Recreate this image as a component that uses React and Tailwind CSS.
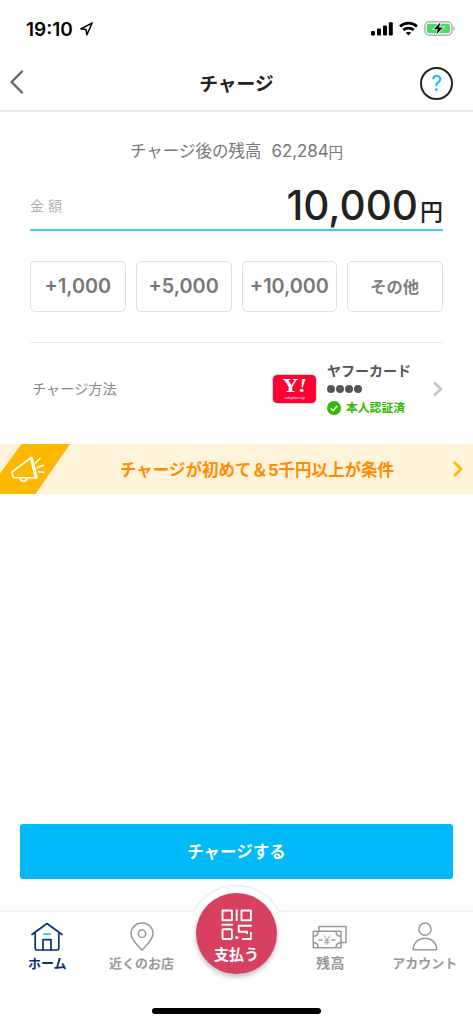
const StatusBar = () => {
  return (
    <div className="flex h-[56px] items-start justify-between pt-[20px] pr-[17px] pl-[26px]">
      <div className="flex items-center gap-[7px]">
        <span className="text-[19px] leading-[19px] font-semibold tracking-[0px] text-black">
          19:10
        </span>
        <svg className="mb-[2px]" width="14" height="15" viewBox="0 0 14 15" fill="none">
          <path
            d="M12.2 2 .8 7.8 6 8.600 6.900 13.800Z"
            stroke="#000"
            strokeWidth="1.5"
            strokeLinejoin="round"
          />
        </svg>
      </div>
      <div className="flex items-center pt-[1px]">
        <svg width="22" height="15" viewBox="0 0 22 15" fill="#000">
          <rect x="0" y="10" width="4" height="4.6" rx="1" />
          <rect x="6" y="7.5" width="4" height="7.1" rx="1" />
          <rect x="12" y="4.5" width="4" height="10.1" rx="1" />
          <rect x="17.8" y="1.2" width="4" height="13.4" rx="1" />
        </svg>
        <svg
          className="ml-[6px]"
          width="19"
          height="15"
          viewBox="0 0 19 15"
          fill="none"
          stroke="#000"
          strokeWidth="2.7"
        >
          <path d="M1 5.5C5.8 1 13.2 1 18 5.5" />
          <path d="M4.2 9.1c3-2.7 7.6-2.7 10.6 0" />
          <path d="M9.5 14.4 6.8 11.8c1.5-1.3 3.9-1.3 5.4 0Z" fill="#000" stroke="none" />
        </svg>
        <svg className="ml-[6px]" width="32" height="15" viewBox="0 0 32 15">
          <rect x="0.9" y="0.9" width="27" height="13.2" rx="4" fill="none" stroke="#a3a3a3" strokeWidth="1.2" />
          <rect x="2.8" y="2.7" width="23.2" height="9.6" rx="2.2" fill="#4cd964" />
          <path d="M29.4 5.2c1.8.7 1.8 3.9 0 4.6Z" fill="#a3a3a3" />
          <path
            d="M16.6 1.2 9.8 8.3h4l-1.6 5.3 6.9-7.2h-4.2Z"
            fill="#000"
            stroke="#fff"
            strokeWidth="1.6"
            paintOrder="stroke"
          />
        </svg>
      </div>
    </div>
  );
};

const Header = () => {
  return (
    <div className="grid h-[56px] grid-cols-[1fr_auto_1fr] items-center border-b-2 border-[#e9e9e9] pr-[20px] pl-[9px]">
      <svg className="mb-[3px]" width="34" height="26" viewBox="0 0 34 26" fill="none">
        <path d="M13 2.5 2.5 13 13 23.5" stroke="#666" strokeWidth="2.4" strokeLinecap="round" strokeLinejoin="round" />
      </svg>
      <h1 className="ml-[11px] pt-[4px] text-[18.8px] font-bold text-[#222]">チャージ</h1>
      <div className="flex size-[33px] items-center justify-center justify-self-end rounded-full border-2 border-[#222] text-[21px] leading-none text-[#00b9f6]">
        ?
      </div>
    </div>
  );
};

const amounts = ["+1,000", "+5,000", "+10,000"];

const AmountForm = () => {
  return (
    <div className="px-[30px]">
      <div className="flex h-[77px] items-center justify-center pt-[2px] text-[#777]">
        <span className="text-[16.5px]">チャージ後の残高</span>
        <span className="ml-[10px] text-[17px] tracking-[-0.1px]">62,284</span>
        <span className="mt-[2px] text-[14.5px]">円</span>
      </div>
      <div className="flex h-[40px] items-center justify-between pb-[7px]">
        <span className="text-[14px] tracking-[4px] text-[#b0b0b0]">金額</span>
        <div className="flex items-baseline text-[#222]">
          <span className="text-[40.5px] leading-[42px] font-medium">10,000</span>
          <span className="ml-[2px] text-[23px] leading-[30px] font-medium">円</span>
        </div>
      </div>
      <div className="h-[2px] bg-[#3dcbf8]"></div>
      <div className="mt-[30px] grid grid-cols-4 gap-[10px]">
        {amounts.map((item) => (
          <button
            className="h-[51px] rounded-[5px] border border-[#e0e0e0] text-[19.8px] font-semibold whitespace-nowrap text-[#777]"
            key={item}
          >
            {item}
          </button>
        ))}
        <button className="h-[51px] rounded-[5px] border border-[#e0e0e0] pt-[1px] pr-[1px] text-[16.3px] font-bold text-[#808080]">
          その他
        </button>
      </div>
      <div className="mt-[30px] border-t border-[#eaeaea]"></div>
    </div>
  );
};

const ChargeMethod = () => {
  return (
    <div className="flex h-[101px] items-center justify-between pr-[30px] pl-[32px]">
      <span className="pb-[9px] text-[14.2px] text-[#888]">チャージ方法</span>
      <div className="flex items-center pb-[9px]">
        <div className="flex h-[28px] w-[43px] flex-col items-center rounded-[4px] bg-[#ff0033] outline outline-[#e0d5d8]">
          <span className="scale-x-[1.15] pt-[1px] font-['Liberation_Serif',serif] text-[19px] leading-[19px] font-bold text-white">
            Y<i>!</i>
          </span>
          <span className="mt-[1px] font-['Liberation_Sans',sans-serif] text-[2.8px] leading-[4px] text-white">
            card.yahoo.co.jp
          </span>
        </div>
        <div className="ml-[11px] w-[86px]">
          <p className="text-[14px] leading-[18px] font-bold whitespace-nowrap text-[#555]">ヤフーカード</p>
          <div className="flex h-[19px] items-center gap-[1px]">
            <i className="size-[8px] rounded-full bg-[#555]"></i>
            <i className="size-[8px] rounded-full bg-[#555]"></i>
            <i className="size-[8px] rounded-full bg-[#555]"></i>
            <i className="size-[8px] rounded-full bg-[#555]"></i>
          </div>
          <div className="flex h-[18px] items-center gap-[5px]">
            <svg width="14" height="14" viewBox="0 0 14 14">
              <circle cx="7" cy="7" r="7" fill="#2fb900" />
              <path d="m3.8 7.3 2.4 2.3 4.2-4.8" fill="none" stroke="#fff" strokeWidth="1.7" />
            </svg>
            <span className="text-[11.8px] leading-[16px] font-bold text-[#2fb900]">本人認証済</span>
          </div>
        </div>
        <svg className="ml-[19px]" width="11" height="16" viewBox="0 0 11 16" fill="none">
          <path d="m2 1.5 7 6.5-7 6.5" stroke="#c4c4c8" strokeWidth="2.4" />
        </svg>
      </div>
    </div>
  );
};

const Campaign = () => {
  return (
    <div className="flex h-[50px] items-center bg-[#fff3d9]">
      <svg width="70" height="50" viewBox="0 0 70 50" fill="none" strokeLinecap="round" strokeLinejoin="round">
        <path d="M0 0V50H35.5L70 0Z" fill="#ffb800" />
        <path d="M0 0H21.5L0 29.5Z" fill="#fff3d9" />
        <g stroke="#fff" strokeWidth="1.6">
          <path d="M30.5 14 12 28l1.2 5.5L35.5 34Z" />
          <path d="m30.5 14 1.5-.5 5 20-1.5.5" />
          <path d="M20.3 34c0 4.2 6.3 4.4 6.5.2" />
          <path d="m35.5 19 4.5-4.5M37.5 23.6l5.8-2.3M38.6 27.8l5.6.6" />
        </g>
      </svg>
      <span className="ml-[50px] pt-[2px] text-[16.5px] font-bold whitespace-nowrap text-[#ff8c00]">
        チャージが初めて＆5千円以上が条件
      </span>
      <svg className="mr-[9px] ml-auto" width="12" height="18" viewBox="0 0 12 18" fill="none">
        <path d="m2 2 7 7-7 7" stroke="#ffb800" strokeWidth="2.8" />
      </svg>
    </div>
  );
};

const HomeIcon = () => (
  <svg width="32" height="30" viewBox="0 0 32 30" fill="none" stroke="#0b2e7d" strokeWidth="1.7" strokeLinecap="round" strokeLinejoin="round">
    <path d="M1 12.5 16 1.5l15 11" />
    <path d="M4.2 11v15.5q0 1.5 1.5 1.5h20.6q1.5 0 1.5-1.5V11" />
    <path d="M12 28V17.7h8V28" />
    <path d="M12.5 12.2h7" stroke="#2cc4f8" />
  </svg>
);

const PinIcon = () => (
  <svg width="24" height="30" viewBox="0 0 24 30" fill="none" stroke="#999" strokeWidth="1.5" strokeLinejoin="round">
    <path d="M12 28.3C10 25.5 1 18.5 1 11.5a11 10.6 0 0 1 22 0c0 7-9 14-11 16.8Z" />
    <circle cx="12" cy="11.7" r="3.7" />
  </svg>
);

const MoneyIcon = () => (
  <svg width="36" height="30" viewBox="0 0 36 30" fill="none" stroke="#999" strokeWidth="1.5" strokeLinejoin="round">
    <path d="M7 9V4.5h27v16h-5" />
    <rect x="1.3" y="9.3" width="27.7" height="16.5" rx="0.5" />
    <path d="M1.3 14.3c3 0 5-2 5-5M24 9.3c0 3 2 5 5 5M1.3 20.8c3 0 5 2 5 5M24 25.8c0-3 2-5 5-5" />
    <path d="M6.5 17.9h4M19.5 17.9h4" />
    <path d="m12 13.5 3 4.3 3-4.3M15 17.8v5M12.3 18.3h5.4M12.3 20.6h5.4" strokeWidth="1" />
  </svg>
);

const UserIcon = () => (
  <svg width="26" height="30" viewBox="0 0 26 30" fill="none" stroke="#999" strokeWidth="1.5" strokeLinejoin="round">
    <circle cx="13" cy="7.2" r="6.1" />
    <path d="M1.3 27.8c0-15.5 23.4-15.5 23.4 0Z" />
  </svg>
);

const QrIcon = () => (
  <svg width="32" height="32" viewBox="0 0 32 32" fill="none" stroke="#fff" strokeWidth="1.9" strokeLinejoin="round">
    <rect x="1.5" y="1.5" width="9.4" height="9.7" />
    <rect x="20.5" y="1.5" width="9.4" height="9.7" />
    <path d="M15.7 0.5V12" />
    <path d="M0.5 15.7h11.4" />
    <rect x="1.5" y="20.3" width="9.4" height="9.7" rx="1" />
    <path d="M30.8 16.7H17.7v6h8.3v2.300M29.900 23V30H21" />
    <circle cx="15.8" cy="28.6" r="1.7" fill="#fff" stroke="none" />
  </svg>
);

const navItems = [
  { label: "ホーム", icon: <HomeIcon />, style: "text-[13px] text-[#0b2e7d]" },
  { label: "近くのお店", icon: <PinIcon />, style: "text-[13px] text-[#999]" },
  null,
  { label: "残高", icon: <MoneyIcon />, style: "text-[14px] tracking-[0.5px] text-[#999]" },
  { label: "アカウント", icon: <UserIcon />, style: "text-[13px] text-[#999]" },
];

const BottomNav = () => {
  return (
    <div className="relative grid h-[114px] grid-cols-5 border-t-2 border-[#f4f4f4] pr-[1px]">
      {navItems.map((item, index) => (
        <div className="flex flex-col items-center pt-[10px]" key={index}>
          {item && item.icon}
          {item && (
            <span className={`mt-[2px] leading-[18px] font-bold whitespace-nowrap ${item.style}`}>
              {item.label}
            </span>
          )}
        </div>
      ))}
      <svg className="absolute top-[-28px] left-[188px]" width="98" height="30" viewBox="0 0 98 30">
        <path d="M5.8 27A48.3 48.3 0 0 1 90.8 27V30H5.8Z" fill="#fff" />
        <path d="M0 27H5.8A48.3 48.3 0 0 1 90.8 27H98" fill="none" stroke="#f1f1f1" strokeWidth="1.7" />
      </svg>
      <button className="absolute top-[-19px] left-[196px] flex size-[81px] flex-col items-center rounded-full bg-[#d84060] pt-[16px] shadow-[0_3px_5px_rgba(0,0,0,0.25)]">
        <QrIcon />
        <span className="mt-[4px] text-[15px] leading-[20px] font-bold text-white">支払う</span>
      </button>
      <div className="absolute bottom-[10px] left-[152px] h-[6px] w-[169px] rounded-full bg-black"></div>
    </div>
  );
};

const App = () => {
  return (
    <div className="flex h-[1024px] w-[473px] flex-col overflow-hidden bg-white font-[Inter,'Noto_Sans_CJK_JP',sans-serif]">
      <StatusBar />
      <Header />
      <AmountForm />
      <ChargeMethod />
      <Campaign />
      <div className="mt-auto px-[20px] pb-[31px]">
        <button className="h-[55px] w-full rounded-[3px] bg-[#00b9f6] pt-[1px] text-[16.5px] font-bold text-white">
          チャージする
        </button>
      </div>
      <BottomNav />
    </div>
  );
};

export default App;
